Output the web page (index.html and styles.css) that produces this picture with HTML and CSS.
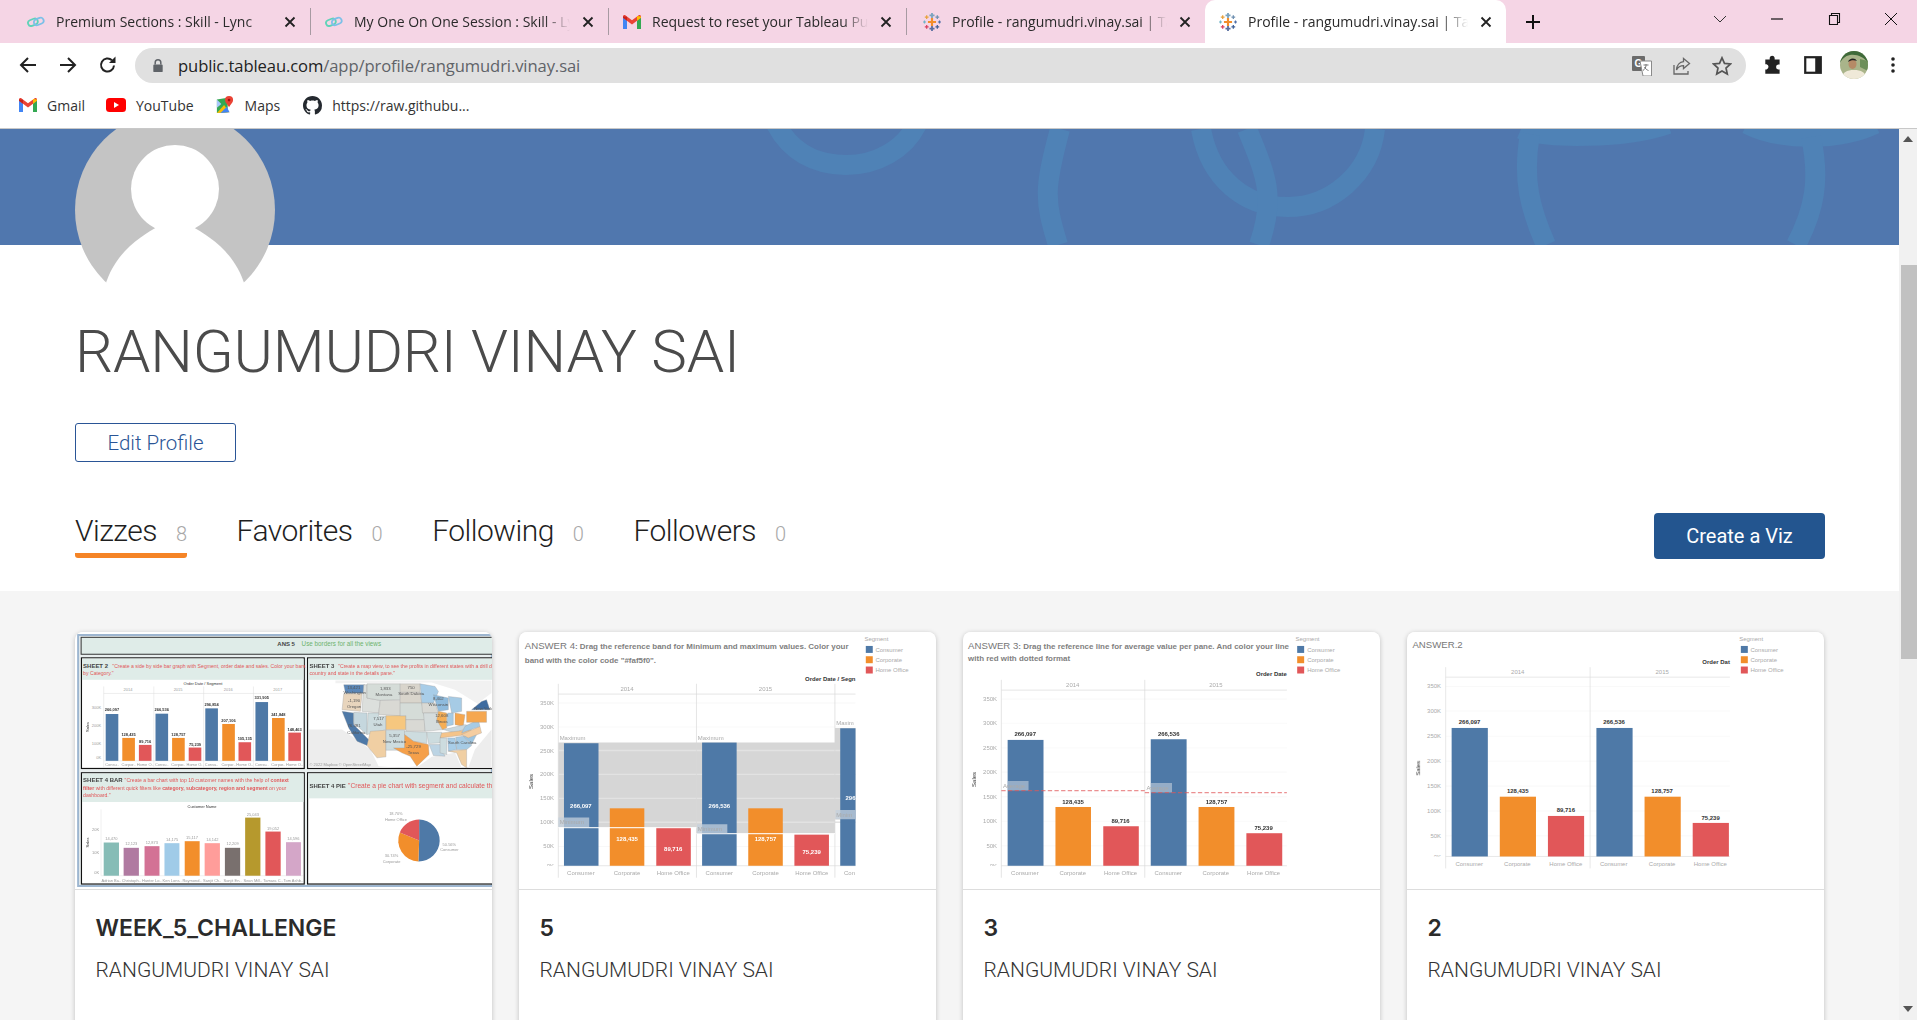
FILE: index.html
```html
<!DOCTYPE html>
<html lang="en">
<head>
  <meta charset="UTF-8">
  <title>Profile - rangumudri.vinay.sai | Tableau Public</title>
  <link rel="stylesheet" href="styles.css">
</head>
<body>
  <svg class="defs" width="0" height="0">
    <symbol id="ic-link" viewBox="0 0 18 12">
      <rect x="0.8" y="3.2" width="10" height="6" rx="3" transform="rotate(-22 6 6)" fill="none" stroke="#5fd3b8" stroke-width="1.8"/>
      <rect x="7" y="2.4" width="10" height="6" rx="3" transform="rotate(-22 12 6)" fill="none" stroke="#7cc0e8" stroke-width="1.8"/>
    </symbol>
    <symbol id="ic-gmail" viewBox="0 0 18 14">
      <path d="M0 2.2V14h4V5.5z" fill="#4285f4"/>
      <path d="M14 5.5V14h4V2.2z" fill="#34a853"/>
      <path d="M0 1.5C0 .2 1.5-.4 2.6.4L9 5.2 15.4.4C16.5-.4 18 .2 18 1.5v1.2l-4 3L9 9.4 4 5.7 0 2.7z" fill="#ea4335"/>
      <path d="M14 .9 18 1.5v1.2l-4 3z" fill="#fbbc04"/>
      <path d="M0 1.5v1.2l4 3V1.8z" fill="#c5221f"/>
    </symbol>
    <symbol id="ic-tableau" viewBox="0 0 20 20">
      <path d="M8.800 5.500h2.400v3.300h3.300v2.400h-3.300v3.300H8.800v-3.300H5.500V8.800h3.300z" fill="#f28e2b"/>
      <path d="M9 0h2v1.800h1.800v1.800H11v1.900H9V3.600H7.200V1.800H9z" fill="#7aa3bf"/>
      <path d="M9 14.500h2v1.900h1.800v1.800H11V20H9v-1.800H7.200v-1.800H9z" fill="#5a6fa0"/>
      <path d="M3.400 2.400h1.400v1.400h1.400v1.400H4.800v1.400H3.400V5.200H2V3.800h1.400z" fill="#e8a23c"/>
      <path d="M15.200 2.400h1.400v1.400H18v1.400h-1.400v1.400h-1.400V5.200h-1.400V3.800h1.400z" fill="#6e8fb0"/>
      <path d="M3.400 13.400h1.400v1.400h1.400v1.400H4.800v1.400H3.400v-1.400H2v-1.400h1.400z" fill="#d8415f"/>
      <path d="M15.200 13.400h1.400v1.400H18v1.400h-1.400v1.400h-1.400v-1.400h-1.400v-1.400h1.400z" fill="#3f5f95"/>
      <path d="M1 8.300h1.300v1.100h1.100v1.200H2.300v1.100H1v-1.100H0V9.400h1z" fill="#6fb3c7"/>
      <path d="M17.700 8.300H19v1.100h1v1.200h-1v1.100h-1.300v-1.100h-1.100V9.400h1.100z" fill="#4f6ea6"/>
    </symbol>
    <symbol id="ic-close" viewBox="0 0 12 12">
      <path d="M1.500 1.500l9 9M10.500 1.500l-9 9" stroke="#222" stroke-width="1.800" fill="none"/>
    </symbol>
  </svg>

  <div class="tabstrip">
    <div class="tab">
      <svg class="tab-icon"><use href="#ic-link"/></svg>
      <span class="tab-title">Premium Sections : Skill - Lync</span>
      <svg class="tab-close"><use href="#ic-close"/></svg>
    </div>
    <div class="tab">
      <svg class="tab-icon"><use href="#ic-link"/></svg>
      <span class="tab-title">My One On One Session : Skill - Lync</span>
      <svg class="tab-close"><use href="#ic-close"/></svg>
    </div>
    <div class="tab">
      <svg class="tab-icon"><use href="#ic-gmail"/></svg>
      <span class="tab-title">Request to reset your Tableau Public password</span>
      <svg class="tab-close"><use href="#ic-close"/></svg>
    </div>
    <div class="tab tab-last">
      <svg class="tab-icon"><use href="#ic-tableau"/></svg>
      <span class="tab-title">Profile - rangumudri.vinay.sai | Tableau Public</span>
      <svg class="tab-close"><use href="#ic-close"/></svg>
    </div>
    <div class="tab tab-active">
      <svg class="tab-icon"><use href="#ic-tableau"/></svg>
      <span class="tab-title">Profile - rangumudri.vinay.sai | Tableau Public</span>
      <svg class="tab-close"><use href="#ic-close"/></svg>
    </div>
    <svg class="new-tab" viewBox="0 0 16 16"><path d="M8 1v14M1 8h14" stroke="#111" stroke-width="2" fill="none"/></svg>
    <div class="window-controls">
      <svg class="win-btn win-chevron" viewBox="0 0 14 14"><path d="M1 4l6 6 6-6" stroke="#333" stroke-width="1" fill="none"/></svg>
      <svg class="win-btn win-min" viewBox="0 0 14 14"><path d="M1 7h12" stroke="#111" stroke-width="1.200"/></svg>
      <svg class="win-btn win-max" viewBox="0 0 14 14"><path d="M2.500 3.500h8v9h-8zM4.500 3.500V1.500h8v9h-2" stroke="#111" stroke-width="1.100" fill="none"/></svg>
      <svg class="win-btn win-x" viewBox="0 0 14 14"><path d="M1 1l12 12M13 1L1 13" stroke="#111" stroke-width="1"/></svg>
    </div>
  </div>

  <div class="toolbar">
    <svg class="nav-icon" viewBox="0 0 20 20"><path d="M18 10H3M10 3l-7 7 7 7" stroke="#222" stroke-width="2" fill="none"/></svg>
    <svg class="nav-icon" viewBox="0 0 20 20"><path d="M2 10h15M10 3l7 7-7 7" stroke="#222" stroke-width="2" fill="none"/></svg>
    <svg class="nav-icon" viewBox="0 0 20 20"><path d="M16 10.500a6.500 6.500 0 1 1-2-5.200" stroke="#222" stroke-width="2" fill="none"/><path d="M17.500 1.500v6.500H11z" fill="#222"/></svg>
    <div class="omnibox">
      <svg class="lock" viewBox="0 0 12 16"><path d="M3 7V4.800a3 3 0 0 1 6 0V7" stroke="#5f6368" stroke-width="1.600" fill="none"/><rect x="1" y="7" width="10" height="8" rx="1" fill="#5f6368"/></svg>
      <span class="url"><b>public.tableau.com</b>/app/profile/rangumudri.vinay.sai</span>
      <span class="omni-right">
        <svg class="omni-icon" viewBox="0 0 20 20"><rect x="0" y="0" width="13" height="15" rx="1" fill="#6b6b6b"/><text x="2.500" y="11" class="gt">G</text><path d="M8 5h11.500v15H11z" fill="#fff" stroke="#8a8a8a"/><path d="M11.500 9h5M14 8v1.500c0 2-1.500 4-3 5M12.500 11c.5 1.500 2.500 3 4 3.500" stroke="#777" fill="none"/></svg>
        <svg class="omni-icon" viewBox="0 0 20 20"><path d="M2 9v9h14v-3" stroke="#666" stroke-width="1.300" fill="none"/><path d="M11.500 2.500l6 5-6 5V9.700C8.500 9.700 6 11 4.500 14c.3-4.500 3-8 7-8.300z" stroke="#666" stroke-width="1.300" fill="none"/></svg>
        <svg class="omni-icon" viewBox="0 0 20 20"><path d="M10 1.800l2.500 5.600 6 .6-4.500 4 1.300 6L10 15l-5.300 3 1.300-6-4.500-4 6-.6z" stroke="#555" stroke-width="1.700" fill="none"/></svg>
      </span>
    </div>
    <svg class="tool-icon ext-icon" viewBox="0 0 20 20"><path d="M7 3.500a2.300 2.300 0 0 1 4.500 0V5H16v4.500h-1.300a2.400 2.400 0 0 0 0 4.700H16V18H3v-4h1.200a2.400 2.400 0 0 0 0-4.600H3V5h4z" fill="#222"/></svg>
    <svg class="tool-icon panel-icon" viewBox="0 0 18 18"><path d="M1 1h16v16H1z" fill="#222"/><path d="M3 3h8v12H3z" fill="#fff"/></svg>
    <svg class="account" viewBox="0 0 28 28">
      <clipPath id="acc-clip"><circle cx="14" cy="14" r="14"/></clipPath>
      <g clip-path="url(#acc-clip)">
        <rect width="28" height="28" fill="#a9b48a"/>
        <path d="M0 0h28v12C24 6 17 3 10 4 5 5 2 8 0 12z" fill="#3f6a3a"/>
        <path d="M20 8l8 2v10l-8-4z" fill="#6d8f5a"/>
        <path d="M2 28c0-7 5-9 12-9s12 2 12 9z" fill="#efe9d8"/>
        <ellipse cx="12.500" cy="13" rx="4" ry="5" fill="#b58a66"/>
        <path d="M8 11c1-4 7-5 9-1-3-1-6-1-9 1z" fill="#222"/>
      </g>
    </svg>
    <svg class="menu-dots" viewBox="0 0 4 16"><circle cx="2" cy="2" r="1.800" fill="#222"/><circle cx="2" cy="8" r="1.800" fill="#222"/><circle cx="2" cy="14" r="1.800" fill="#222"/></svg>
  </div>

  <div class="bookmarks">
    <span class="bm bm-gmail"><svg class="bm-icon"><use href="#ic-gmail"/></svg>Gmail</span>
    <span class="bm bm-yt">
      <svg class="bm-icon" viewBox="0 0 20 14"><rect width="20" height="14" rx="3.500" fill="#f00"/><path d="M8 4l5 3-5 3z" fill="#fff"/></svg>YouTube</span>
    <span class="bm bm-maps">
      <svg class="bm-icon maps-icon" viewBox="0 0 20 20">
        <path d="M1 4l12-2v16L1 19z" fill="#34a853"/>
        <path d="M1 19l8-9 6 8z" fill="#fbbc04"/>
        <path d="M5 19l7-7 3 6z" fill="#4285f4"/>
        <path d="M1 4l5 5-5 4z" fill="#a8c7fa"/>
        <path d="M14.500 0a4.500 4.500 0 0 1 4.500 4.500c0 3-3 5-4.500 8C13 9.500 10 7.500 10 4.500A4.500 4.500 0 0 1 14.500 0z" fill="#ea4335"/>
        <circle cx="14.500" cy="4.500" r="1.500" fill="#a50e0e"/>
      </svg>Maps</span>
    <span class="bm bm-gh">
      <svg class="bm-icon" viewBox="0 0 16 16"><path d="M8 0C3.580 0 0 3.580 0 8c0 3.540 2.290 6.530 5.470 7.590.4.070.55-.17.55-.38 0-.19-.01-.82-.01-1.490-2.010.37-2.530-.49-2.690-.94-.09-.23-.48-.94-.82-1.130-.28-.15-.68-.52-.01-.53.63-.01 1.080.58 1.230.82.720 1.210 1.870.870 2.330.660.070-.520.280-.870.510-1.070-1.780-.200-3.640-.890-3.640-3.950 0-.870.310-1.590.820-2.150-.080-.200-.360-1.020.080-2.120 0 0 .670-.210 2.200.820.640-.180 1.320-.270 2-.270s1.360.090 2 .270c1.530-1.040 2.200-.820 2.200-.820.440 1.100.160 1.920.080 2.120.510.560.820 1.270.820 2.150 0 3.070-1.870 3.750-3.650 3.950.290.250.540.730.540 1.480 0 1.070-.010 1.930-.010 2.200 0 .210.150.460.550.380A8.010 8.010 0 0 0 16 8c0-4.420-3.580-8-8-8z" fill="#24292f"/></svg>https://raw.githubu...</span>
  </div>

  <div class="viewport">
    <main class="content">
      <section class="banner">
        <svg class="banner-art" viewBox="0 0 1899 116" preserveAspectRatio="none">
          <g fill="none" stroke="#4f82b6" stroke-width="20">
            <path d="M776 -5C790 22 815 36 846 36S905 20 917 -5"/>
            <path d="M1060 0C1044 60 1044 70 1058 116"/>
            <path d="M1201 0C1210 50 1245 78 1288 78S1370 45 1375 0"/>
            <path d="M1247 0C1268 50 1275 70 1259 116"/>
            <path d="M1521 0C1545 10 1625 10 1668 -5"/>
            <path d="M1530 5C1522 50 1530 80 1546 116"/>
            <path d="M1747 -5C1780 12 1840 12 1875 -5"/>
            <path d="M1811 8C1820 50 1815 80 1796 116"/>
          </g>
        </svg>
      </section>

      <svg class="avatar" viewBox="0 0 200 200">
        <circle cx="100" cy="100" r="100" fill="#c4c4c4"/>
        <circle cx="100" cy="79" r="44" fill="#fff"/>
        <path d="M30 176C40 142 66 126 84 116H116C134 126 160 142 170 176V202H30z" fill="#fff"/>
      </svg>

      <section class="profile">
        <h1 class="profile-name">RANGUMUDRI VINAY SAI</h1>
        <a class="edit-btn">Edit Profile</a>
        <div class="profile-nav">
          <nav class="nav-tabs">
            <a class="nav-tab nav-tab-on">Vizzes<span class="count">8</span></a>
            <a class="nav-tab">Favorites<span class="count">0</span></a>
            <a class="nav-tab">Following<span class="count">0</span></a>
            <a class="nav-tab">Followers<span class="count">0</span></a>
          </nav>
          <a class="create-btn">Create a Viz</a>
        </div>
      </section>

      <section class="gallery">
        <article class="card">
          <svg class="thumb" viewBox="48 36 1251 774">
            <rect x="48" y="36" width="1251" height="774" fill="#fff"/>
            <rect x="55" y="45" width="1246" height="756" fill="#e8eeee" stroke="#9db6d0" stroke-width="6"/>
            <rect x="64" y="52" width="1240" height="51" fill="#dfece8" stroke="#333" stroke-width="3"/>
            <text x="655" y="77" class="sh">ANS 5</text>
            <text x="728" y="77" class="green">Use borders for all the views</text>

            <rect x="65" y="114" width="671" height="333" fill="#fff" stroke="#111" stroke-width="3.500"/>
            <rect x="67" y="116" width="667" height="64" fill="#dfece8"/>
            <text x="70" y="144" class="sh">SHEET 2</text>
            <text x="158" y="144" class="red">"Create a side by side bar graph with Segment, order date and sales. Color your bars</text>
            <text x="70" y="166" class="red">by Category."</text>
            <text x="431" y="195" class="tiny dark" text-anchor="middle">Order Date / Segment</text>
            <path d="M132 200V445M283 200V445M433 200V445M583 200V445M132 221H732M132 424H732" stroke="#ddd" stroke-width="1.500" fill="none"/>
            <text x="205" y="215" class="tiny" text-anchor="middle">2014</text>
            <text x="356" y="215" class="tiny" text-anchor="middle">2015</text>
            <text x="507" y="215" class="tiny" text-anchor="middle">2016</text>
            <text x="656" y="215" class="tiny" text-anchor="middle">2017</text>
            <text x="124" y="268" class="tiny" text-anchor="end">300K</text>
            <text x="124" y="321" class="tiny" text-anchor="end">200K</text>
            <text x="124" y="375" class="tiny" text-anchor="end">100K</text>
            <text x="124" y="420" class="tiny" text-anchor="end">0K</text>
            <text transform="translate(87 322) rotate(-90)" class="tiny dark" text-anchor="middle">Sales</text>
            <g class="blue">
              <rect x="138" y="283" width="38" height="141"/><rect x="288" y="282" width="38" height="142"/><rect x="438" y="266" width="38" height="158"/><rect x="589" y="247" width="38" height="177"/>
            </g>
            <g class="orange">
              <rect x="188" y="355" width="38" height="69"/><rect x="338" y="355" width="38" height="69"/><rect x="489" y="313" width="38" height="111"/><rect x="639" y="295" width="38" height="129"/>
            </g>
            <g class="redbar">
              <rect x="238" y="376" width="38" height="48"/><rect x="388" y="384" width="38" height="40"/><rect x="538" y="368" width="38" height="56"/><rect x="688" y="339" width="38" height="85"/>
            </g>
            <g class="tiny dark bold" text-anchor="middle">
              <text x="157" y="275">266,097</text><text x="207" y="349">128,435</text><text x="257" y="370">89,716</text>
              <text x="307" y="275">266,536</text><text x="357" y="349">128,757</text><text x="407" y="378">75,239</text>
              <text x="457" y="259">296,854</text><text x="508" y="306">207,106</text><text x="557" y="362">105,135</text>
              <text x="608" y="239">331,905</text><text x="658" y="288">241,848</text><text x="707" y="333">148,463</text>
            </g>
            <g class="tiny" text-anchor="middle">
              <text x="157" y="441">Consu..</text><text x="207" y="441">Corpor..</text><text x="257" y="441">Home O..</text>
              <text x="307" y="441">Consu..</text><text x="357" y="441">Corpor..</text><text x="407" y="441">Home O..</text>
              <text x="457" y="441">Consu..</text><text x="508" y="441">Corpor..</text><text x="557" y="441">Home O..</text>
              <text x="608" y="441">Consu..</text><text x="658" y="441">Corpor..</text><text x="707" y="441">Home O..</text>
            </g>

            <rect x="746" y="114" width="560" height="333" fill="#fff" stroke="#111" stroke-width="3.500"/>
            <rect x="748" y="116" width="556" height="64" fill="#dfece8"/>
            <text x="752" y="144" class="sh">SHEET 3</text>
            <text x="838" y="144" class="red">"Create a map view, to see the profits in different states with a drill down on</text>
            <text x="752" y="167" class="red">country and state in the details pane."</text>
            <g transform="translate(720 150)" stroke="#9a9a9a" stroke-width="1">
              <path d="M130 180L215 240 240 290 300 295 360 290 400 262 470 250 490 295H510L530 240 580 180V295H30V180z" fill="#ededed" stroke="none"/>
              <path d="M110 32H580V70L540 100 575 125 470 60 400 38 110 40z" fill="#f1f1f1" stroke="none"/>
              <path d="M135 45H198L195 70H140z" fill="#5b87b8"/>
              <path d="M135 72H190L185 125 130 120z" fill="#e8d5bd"/>
              <path d="M130 125L165 130V165L215 215 205 228 175 215 150 175z" fill="#4e79a7"/>
              <path d="M165 128L205 130V195L165 160z" fill="#c5d7de"/>
              <path d="M195 45H205V85L245 92 240 130 190 125z" fill="#dcdfdc"/>
              <path d="M205 42H305V90L245 92 205 85z" fill="#d5dcd8"/>
              <path d="M245 92H305V138L240 135z" fill="#d9d9d4"/>
              <path d="M208 130H240V140H262V180L205 195z" fill="#cddcdf"/>
              <path d="M215 185L262 182V262L235 265 205 228z" fill="#f0cfa3"/>
              <path d="M262 138H322V180H262z" fill="#f6c77f"/>
              <path d="M262 182H318V242H262z" fill="#cddcdf"/>
              <path d="M305 42H365V68H305z" fill="#d9d5cc"/>
              <path d="M305 68H365L370 100H305z" fill="#d9d5cc"/>
              <path d="M305 100H370L380 150H322V138H305z" fill="#d5dcd8"/>
              <path d="M322 150H380V185H322z" fill="#d9d9d4"/>
              <path d="M318 185L385 188V222L345 215 318 195z" fill="#cddcdf"/>
              <path d="M318 195L345 215 390 225 392 255 355 290 335 260 310 250 285 235H318z" fill="#f5a04a"/>
              <path d="M365 42L410 50 420 65 405 100H370z" fill="#a8cde8"/>
              <path d="M370 100H410L420 130H372z" fill="#d9d9d4"/>
              <path d="M375 130H420L435 180 380 185z" fill="#d5dcdc"/>
              <path d="M385 188H430L425 220 390 222z" fill="#cddcdf"/>
              <path d="M392 225H425L440 260 405 258z" fill="#bcd4e4"/>
              <path d="M405 75L450 85V120L420 125z" fill="#8fbbdd"/>
              <path d="M420 125L445 130V175L432 180 415 150z" fill="#f5ae55"/>
              <path d="M450 80L490 85V125L460 130z" fill="#a6cbe5"/>
              <path d="M448 130H465V165L445 170z" fill="#a6cbe5"/>
              <path d="M470 130L500 135 495 170 470 165z" fill="#f5a750"/>
              <path d="M435 180L500 165 520 170 470 190z" fill="#c9d8df"/>
              <path d="M430 190L520 180 510 195 425 205z" fill="#f5c48a"/>
              <path d="M425 205H445V255L425 250z" fill="#cddcdf"/>
              <path d="M448 205H470L475 240 450 245z" fill="#a8cde8"/>
              <path d="M472 203L495 200 520 228 505 240H475z" fill="#a6cbe5"/>
              <path d="M495 200L535 195 520 225z" fill="#9cc4e0"/>
              <path d="M490 195L545 170 550 190 510 205z" fill="#f5cda0"/>
              <path d="M450 245L505 240V295L490 285 475 250z" fill="#f0cfa3"/>
              <path d="M500 170L540 150 545 170 490 190z" fill="#a6cbe5"/>
              <path d="M505 125H565V158H505z" fill="#f5a750"/>
              <path d="M520 120L550 95 565 90 575 120z" fill="#3e6b9f"/>
            </g>
            <g class="tiny map" text-anchor="middle">
              <text x="885" y="207">13,421</text><text x="888" y="223">Washington</text>
              <text x="886" y="248">-1,190</text><text x="886" y="266">Oregon</text>
              <text x="980" y="212">1,833</text><text x="976" y="230">Montana</text>
              <text x="1058" y="207">750</text><text x="1058" y="225">South Dakota</text>
              <text x="886" y="322">76,381</text><text x="893" y="342">California</text>
              <text x="960" y="301">7,517</text><text x="958" y="320">Utah</text>
              <text x="1008" y="352">5,357</text><text x="1008" y="371">New Mexico</text>
              <text x="1065" y="385">-25,729</text><text x="1065" y="403">Texas</text>
              <text x="1150" y="293">12,608</text><text x="1150" y="311">Illinois</text>
              <text x="1140" y="241">8,402</text><text x="1140" y="259">Wisconsin</text>
              <text x="1275" y="270">New York</text><text x="1212" y="374">South Carolina</text>
            </g>
            <text x="752" y="441" class="tiny">© 2022 Mapbox © OpenStreetMap</text>

            <rect x="65" y="460" width="671" height="335" fill="#fff" stroke="#111" stroke-width="3.500"/>
            <rect x="67" y="462" width="667" height="86" fill="#dfece8"/>
            <text x="70" y="489" class="sh">SHEET 4 BAR</text>
            <text x="195" y="489" class="red">"Create a bar chart with top 10 customer names with the help of <tspan class="bold">context</tspan></text>
            <text x="70" y="513" class="red"><tspan class="bold">filter</tspan> with different quick filters like <tspan class="bold">category, subcategory, region and segment</tspan> on your</text>
            <text x="70" y="534" class="red">dashboard."</text>
            <text x="428" y="565" class="tiny dark" text-anchor="middle">Customer Name</text>
            <path d="M124 570V770H732" stroke="#e2e2e2" fill="none" stroke-width="1.500"/>
            <text x="118" y="635" class="tiny" text-anchor="end">20K</text>
            <text x="118" y="706" class="tiny" text-anchor="end">10K</text>
            <text x="118" y="766" class="tiny" text-anchor="end">0K</text>
            <text transform="translate(87 670) rotate(-90)" class="tiny dark" text-anchor="middle">Sales</text>
            <rect x="132" y="670" width="46" height="100" fill="#86bcb6"/>
            <rect x="192" y="686" width="46" height="84" fill="#b07aa1"/>
            <rect x="255" y="681" width="45" height="89" fill="#d37295"/>
            <rect x="315" y="672" width="45" height="98" fill="#a0cbe8"/>
            <rect x="376" y="666" width="45" height="104" fill="#f28e2b"/>
            <rect x="436" y="672" width="46" height="98" fill="#ff9d9a"/>
            <rect x="497" y="686" width="46" height="84" fill="#79706e"/>
            <rect x="558" y="595" width="46" height="175" fill="#b6992d"/>
            <rect x="619" y="637" width="46" height="133" fill="#e15759"/>
            <rect x="681" y="669" width="45" height="101" fill="#d4a6c8"/>
            <g class="tiny" text-anchor="middle">
              <text x="155" y="663">14,470</text><text x="215" y="679">12,123</text><text x="277" y="674">12,873</text><text x="338" y="665">14,175</text><text x="398" y="659">15,117</text><text x="459" y="665">14,142</text><text x="520" y="679">12,209</text><text x="581" y="589">25,043</text><text x="642" y="631">19,052</text><text x="703" y="662">14,596</text>
              <text x="155" y="788">Adrian Ba..</text><text x="215" y="788">Christoph..</text><text x="277" y="788">Hunter Lo..</text><text x="338" y="788">Ken Lons..</text><text x="398" y="788">Raymond..</text><text x="459" y="788">Sanjit Ch..</text><text x="520" y="788">Sanjit En..</text><text x="581" y="788">Sean Mill..</text><text x="642" y="788">Tamara C..</text><text x="703" y="788">Tom Ashb..</text>
            </g>

            <rect x="746" y="460" width="560" height="335" fill="#fff" stroke="#111" stroke-width="3.500"/>
            <rect x="748" y="462" width="556" height="75" fill="#dfece8"/>
            <text x="752" y="505" class="sh">SHEET 4 PIE</text>
            <text x="868" y="505" class="red big">"Create a pie chart with segment and calculate the</text>
            <path d="M1082 664V601A63 63 0 0 1 1079.800 727z" fill="#4e79a7"/>
            <path d="M1082 664L1079.800 727A63 63 0 0 1 1023.900 639.700z" fill="#f28e2b"/>
            <path d="M1082 664L1023.900 639.700A63 63 0 0 1 1082 601z" fill="#e15759"/>
            <g class="tiny" text-anchor="middle">
              <text x="1012" y="588">18.70%</text><text x="1012" y="606">Home Office</text>
              <text x="1173" y="680">50.56%</text><text x="1173" y="697">Consumer</text>
              <text x="999" y="714">30.74%</text><text x="999" y="731">Corporate</text>
            </g>
          </svg>
          <div class="card-body">
            <h2 class="card-title">WEEK_5_CHALLENGE</h2>
            <p class="card-author">RANGUMUDRI VINAY SAI</p>
          </div>
        </article>

        <article class="card">
          <svg class="thumb" viewBox="27 36 1251 774">
            <rect x="27" y="36" width="1251" height="774" fill="#fff"/>
            <text x="42" y="87" class="ans">ANSWER 4<tspan class="q">: Drag the reference band for Minimum and maximum values. Color your</tspan></text>
            <text x="42" y="130" class="q">band with the color code "#faf5f0".</text>
            <text x="1038" y="183" class="lab dark bold" text-anchor="end">Order Date / Segn</text>
            <g class="lab">
              <text x="1065" y="64" class="dark">Segment</text>
              <text x="1098" y="95">Consumer</text><text x="1098" y="126">Corporate</text><text x="1098" y="157">Home Office</text>
            </g>
            <rect x="1069" y="78" width="21" height="21" class="blue"/><rect x="1069" y="109" width="21" height="21" class="orange"/><rect x="1069" y="140" width="21" height="21" class="redbar"/>
            <path d="M143 250H1038M143 322H1038M143 393H1038M143 465H1038M143 537H1038M143 609H1038M143 682H1038" stroke="#f0f0f0" stroke-width="1.500"/>
            <path d="M143 369H559V625H143zM559 369H976V643H559zM976 325H1038V601H976z" fill="#d6d6d6"/>
            <path d="M143 393H1038M143 465H1038M143 537H1038M143 609H1038" stroke="#e2e2e2" stroke-width="4"/>
            <path d="M143 192V776M559 192V776M976 192V776M143 223H1038M143 740H1038" stroke="#d8d8d8" stroke-width="2" fill="none"/>
            <g class="blue"><rect x="160" y="371" width="104" height="369"/><rect x="576" y="369" width="104" height="371"/><rect x="992" y="326" width="46" height="414"/></g>
            <g class="orange"><rect x="298" y="567" width="104" height="173"/><rect x="715" y="567" width="104" height="173"/></g>
            <g class="redbar"><rect x="438" y="625" width="104" height="115"/><rect x="854" y="646" width="104" height="94"/></g>
            <path d="M143 625H559M559 643H976" stroke="#fff" stroke-width="4" opacity=".85"/>
            <path d="M143 595H236V623H143zM561 615H652V643H561zM978 572H1038V600H978z" fill="#c4d0dc" opacity=".75"/>
            <g class="lab" text-anchor="middle">
              <text x="350" y="214">2014</text><text x="767" y="214">2015</text>
              <text x="211" y="768">Consumer</text><text x="350" y="768">Corporate</text><text x="489" y="768">Home Office</text>
              <text x="628" y="768">Consumer</text><text x="767" y="768">Corporate</text><text x="906" y="768">Home Office</text>
              <text x="1020" y="768">Con</text>
            </g>
            <g class="lab" text-anchor="end">
              <text x="130" y="256">350K</text><text x="130" y="328">300K</text><text x="130" y="399">250K</text><text x="130" y="471">200K</text><text x="130" y="543">150K</text><text x="130" y="615">100K</text><text x="130" y="688">50K</text><text x="130" y="747">0K</text>
            </g>
            <rect x="90" y="740" width="44" height="12" fill="#fff"/>
            <g class="lab"><text x="147" y="362">Maximum</text><text x="563" y="360">Maximum</text><text x="980" y="316">Maxim</text><text x="147" y="615">Minimum</text><text x="563" y="635">Minimum</text><text x="980" y="592">Minim</text></g>
            <g class="lab white bold" text-anchor="middle"><text x="211" y="567">266,097</text><text x="350" y="666">128,435</text><text x="489" y="695">89,716</text><text x="628" y="566">266,536</text><text x="767" y="666">128,757</text><text x="906" y="704">75,239</text><text x="1023" y="543">296</text></g>
            <text transform="translate(68 486) rotate(-90)" class="lab dark" text-anchor="middle">Sales</text>
          </svg>
          <div class="card-body">
            <h2 class="card-title">5</h2>
            <p class="card-author">RANGUMUDRI VINAY SAI</p>
          </div>
        </article>

        <article class="card">
          <svg class="thumb" viewBox="24 36 1251 774">
            <rect x="24" y="36" width="1251" height="774" fill="#fff"/>
            <text x="37" y="87" class="ans">ANSWER 3<tspan class="q">: Drag the reference line for average value per pane. And color your line</tspan></text>
            <text x="37" y="122" class="q">with red with dotted format</text>
            <text x="997" y="170" class="lab dark bold" text-anchor="end">Order Date</text>
            <g class="lab">
              <text x="1023" y="64" class="dark">Segment</text>
              <text x="1058" y="95">Consumer</text><text x="1058" y="126">Corporate</text><text x="1058" y="157">Home Office</text>
            </g>
            <rect x="1028" y="78" width="21" height="21" class="blue"/><rect x="1028" y="109" width="21" height="21" class="orange"/><rect x="1028" y="140" width="21" height="21" class="redbar"/>
            <path d="M137 238H997M137 311H997M137 385H997M137 458H997M137 532H997M137 606H997M137 680H997" stroke="#f2f2f2" stroke-width="1.500"/>
            <path d="M137 180V776M569 180V776M137 211H997M137 740H997" stroke="#d8d8d8" stroke-width="2" fill="none"/>
            <g class="blue"><rect x="156" y="361" width="108" height="379"/><rect x="587" y="359" width="108" height="381"/></g>
            <g class="orange"><rect x="300" y="563" width="107" height="177"/><rect x="731" y="563" width="108" height="177"/></g>
            <g class="redbar"><rect x="444" y="621" width="107" height="119"/><rect x="875" y="642" width="108" height="98"/></g>
            <path d="M156 485H219V513H156zM587 491H651V519H587z" fill="#c4d0dc" opacity=".6"/>
            <path d="M137 514H569M569 520H997" stroke="#e15759" stroke-width="2.500" stroke-dasharray="13 7"/>
            <g class="lab" text-anchor="middle">
              <text x="352" y="202">2014</text><text x="783" y="202">2015</text>
              <text x="208" y="768">Consumer</text><text x="352" y="768">Corporate</text><text x="496" y="768">Home Office</text>
              <text x="640" y="768">Consumer</text><text x="783" y="768">Corporate</text><text x="927" y="768">Home Office</text>
            </g>
            <g class="lab" text-anchor="end">
              <text x="124" y="244">350K</text><text x="124" y="317">300K</text><text x="124" y="391">250K</text><text x="124" y="464">200K</text><text x="124" y="538">150K</text><text x="124" y="612">100K</text><text x="124" y="686">50K</text><text x="124" y="747">0K</text>
            </g>
            <rect x="90" y="740" width="44" height="12" fill="#fff"/>
            <g class="lab"><text x="142" y="506">Average</text><text x="574" y="513">Average</text></g>
            <g class="lab dark bold" text-anchor="middle"><text x="209" y="350">266,097</text><text x="353" y="553">128,435</text><text x="496" y="611">89,716</text><text x="641" y="349">266,536</text><text x="785" y="553">128,757</text><text x="927" y="631">75,239</text></g>
            <text transform="translate(62 480) rotate(-90)" class="lab dark" text-anchor="middle">Sales</text>
          </svg>
          <div class="card-body">
            <h2 class="card-title">3</h2>
            <p class="card-author">RANGUMUDRI VINAY SAI</p>
          </div>
        </article>

        <article class="card">
          <svg class="thumb" viewBox="20 36 1251 774">
            <rect x="20" y="36" width="1251" height="774" fill="#fff"/>
            <text x="34" y="85" class="ans">ANSWER.2</text>
            <text x="990" y="133" class="lab dark bold" text-anchor="end">Order Dat</text>
            <g class="lab">
              <text x="1018" y="64" class="dark">Segment</text>
              <text x="1052" y="95">Consumer</text><text x="1052" y="126">Corporate</text><text x="1052" y="157">Home Office</text>
            </g>
            <rect x="1023" y="78" width="21" height="21" class="blue"/><rect x="1023" y="109" width="21" height="21" class="orange"/><rect x="1023" y="140" width="21" height="21" class="redbar"/>
            <path d="M134 200H990M134 274H990M134 350H990M134 425H990M134 500H990M134 575H990M134 650H990" stroke="#f2f2f2" stroke-width="1.500"/>
            <path d="M134 142V748M569 142V748M134 172H990M134 712H990" stroke="#dcdcdc" stroke-width="2" fill="none"/>
            <g class="blue"><rect x="152" y="325" width="109" height="387"/><rect x="588" y="325" width="109" height="387"/></g>
            <g class="orange"><rect x="297" y="532" width="109" height="180"/><rect x="733" y="532" width="109" height="180"/></g>
            <g class="redbar"><rect x="442" y="590" width="109" height="122"/><rect x="878" y="611" width="109" height="101"/></g>
            <g class="lab" text-anchor="middle">
              <text x="351" y="164">2014</text><text x="786" y="164">2015</text>
              <text x="205" y="740">Consumer</text><text x="350" y="740">Corporate</text><text x="496" y="740">Home Office</text>
              <text x="640" y="740">Consumer</text><text x="786" y="740">Corporate</text><text x="931" y="740">Home Office</text>
            </g>
            <g class="lab" text-anchor="end">
              <text x="120" y="206">350K</text><text x="120" y="280">300K</text><text x="120" y="356">250K</text><text x="120" y="431">200K</text><text x="120" y="506">150K</text><text x="120" y="581">100K</text><text x="120" y="656">50K</text><text x="120" y="719">0K</text>
            </g>
            <rect x="90" y="712" width="40" height="12" fill="#fff"/>
            <g class="lab dark bold" text-anchor="middle"><text x="206" y="314">266,097</text><text x="351" y="521">128,435</text><text x="496" y="579">89,716</text><text x="641" y="314">266,536</text><text x="786" y="521">128,757</text><text x="932" y="601">75,239</text></g>
            <text transform="translate(58 446) rotate(-90)" class="lab dark" text-anchor="middle">Sales</text>
          </svg>
          <div class="card-body">
            <h2 class="card-title">2</h2>
            <p class="card-author">RANGUMUDRI VINAY SAI</p>
          </div>
        </article>
      </section>
    </main>

    <div class="scrollbar">
      <span class="arrow-up"></span>
      <span class="thumb-bar"></span>
      <span class="arrow-down"></span>
    </div>
  </div>
</body>
</html>
```

FILE: styles.css
```css
* {
  box-sizing: border-box;
}
html, body {
  margin: 0;
  height: 100%;
  overflow: hidden;
}
body {
  display: flex;
  flex-direction: column;
  font-family: "Open Sans", "Noto Sans", sans-serif;
  background: #fff;
  color: #222;
}
.defs {
  position: absolute;
}

/* browser chrome */
.tabstrip {
  display: flex;
  align-items: stretch;
  height: 43px;
  padding-left: 13px;
  background: #f5d5e5;
  flex: none;
}
.tab {
  display: flex;
  align-items: center;
  width: 298px;
  padding: 0 14px 0 14px;
  border-right: 1px solid #a79aa2;
  margin: 8px 0;
  font-size: 14px;
  color: #2a2a2a;
}
.tab-last {
  border-right: 0;
  padding-left: 16px;
}
.tab-active {
  width: 301px;
  margin: 0;
  padding-top: 0;
  border: 0;
  background: #fff;
  border-radius: 10px 10px 0 0;
}
.tab-icon {
  width: 18px;
  height: 18px;
  flex: none;
  margin-right: 11px;
}
.tab-title {
  flex: 1;
  min-width: 0;
  overflow: hidden;
  white-space: nowrap;
  -webkit-mask-image: linear-gradient(to right, #000 88%, transparent);
  mask-image: linear-gradient(to right, #000 88%, transparent);
}
.tab-close {
  width: 12px;
  height: 12px;
  margin-left: 12px;
  flex: none;
}
.new-tab {
  width: 16px;
  height: 16px;
  margin: 14px 0 0 19px;
}
.window-controls {
  display: flex;
  flex: 1;
  justify-content: flex-end;
  align-items: center;
  gap: 43px;
  padding: 0 19px 6px 0;
}
.win-btn {
  width: 14px;
  height: 14px;
  flex: none;
}

.toolbar {
  display: flex;
  align-items: center;
  height: 44px;
  padding-left: 18px;
  flex: none;
}
.nav-icon {
  width: 20px;
  height: 20px;
  margin-right: 20px;
  flex: none;
}
.omnibox {
  display: flex;
  align-items: center;
  width: 1611px;
  height: 35px;
  margin: 1px 0 0 -3px;
  padding: 0 0 0 17px;
  border-radius: 18px;
  background: #e0e0e0;
  flex: none;
}
.lock {
  width: 12px;
  height: 15px;
  margin-right: 14px;
}
.url {
  font-size: 16.6px;
  color: #5f6368;
  letter-spacing: -.1px;
}
.url b {
  font-weight: 400;
  color: #222;
}
.omni-right {
  display: flex;
  align-items: center;
  gap: 20px;
  margin-left: auto;
  padding-right: 14px;
}
.omni-icon {
  width: 20px;
  height: 20px;
}
.gt {
  font: bold 10px "Liberation Sans", sans-serif;
  fill: #fff;
}
.tool-icon {
  width: 22px;
  height: 22px;
  flex: none;
}
.ext-icon {
  margin-left: 16px;
}
.panel-icon {
  width: 20px;
  height: 20px;
  margin-left: 19px;
}
.account {
  width: 28px;
  height: 28px;
  margin-left: 17px;
  flex: none;
}
.menu-dots {
  width: 4px;
  height: 16px;
  margin-left: 23px;
}

.bookmarks {
  display: flex;
  align-items: center;
  height: 42px;
  padding: 0 0 5px 19px;
  border-bottom: 1px solid #c8c8c8;
  font-size: 14px;
  color: #333;
  flex: none;
}
.bm {
  display: flex;
  align-items: center;
  margin-right: 21px;
}
.bm-yt {
  margin-right: 22px;
}
.bm-maps {
  margin-right: 23px;
}
.bm-icon {
  width: 18px;
  height: 14px;
  margin-right: 10px;
}
.bm-yt .bm-icon {
  width: 20px;
}
.maps-icon {
  height: 18px;
  margin-right: 11px;
}
.bm-gh .bm-icon {
  width: 19px;
  height: 19px;
}

/* page */
.viewport {
  display: flex;
  flex: 1;
  min-height: 0;
}
.content {
  position: relative;
  flex: 1;
  min-width: 0;
  overflow: hidden;
  background: #f5f5f5;
}
.banner {
  height: 116px;
  background: #5077ae;
}
.banner-art {
  display: block;
  width: 100%;
  height: 100%;
}
.avatar {
  position: absolute;
  left: 75px;
  top: -19px;
  width: 200px;
  height: 200px;
}
.profile {
  height: 346px;
  padding: 71px 74px 0 75px;
  background: #fff;
  font-family: Roboto, "Liberation Sans", sans-serif;
  font-weight: 300;
}
.profile-name {
  margin: 0 0 35px;
  font-size: 60px;
  line-height: 72px;
  font-weight: 300;
  color: #4b4b4b;
  letter-spacing: -.2px;
}
.edit-btn {
  display: flex;
  align-items: center;
  justify-content: center;
  width: 161px;
  height: 39px;
  border: 1px solid #2a5596;
  border-radius: 3px;
  font-size: 20.5px;
  color: #2a5596;
}
.profile-nav {
  display: flex;
  align-items: flex-end;
  justify-content: space-between;
  margin-top: 48px;
}
.nav-tabs {
  display: flex;
  gap: 50px;
  margin-bottom: 3px;
}
.nav-tab {
  display: flex;
  align-items: baseline;
  height: 48px;
  font-size: 30px;
  line-height: 42px;
  color: #1f1f1f;
  letter-spacing: -.5px;
}
.nav-tab-on {
  border-bottom: 5px solid #f58426;
  border-radius: 0 0 3px 3px;
}
.count {
  margin-left: 19px;
  font-size: 20px;
  color: #a8a8a8;
}
.create-btn {
  display: flex;
  align-items: center;
  justify-content: center;
  width: 171px;
  height: 46px;
  margin-bottom: 2px;
  border-radius: 4px;
  background: #23558f;
  font-size: 20px;
  font-weight: 400;
  color: #fff;
}

.gallery {
  display: grid;
  grid-template-columns: repeat(4, 417px);
  gap: 27px;
  padding: 41px 0 0 75px;
}
.card {
  height: 500px;
  border-radius: 8px 8px 0 0;
  background: #fff;
  box-shadow: 0 1px 5px rgba(0, 0, 0, .22);
  overflow: hidden;
}
.thumb {
  display: block;
  width: 417px;
  height: 258px;
  filter: blur(.6px);
  border-bottom: 1px solid #ddd;
  font-family: "Liberation Sans", sans-serif;
}
.thumb .blue { fill: #4e79a7; }
.thumb .orange { fill: #f28e2b; }
.thumb .redbar { fill: #e15759; }
.sh { font-size: 18px; font-weight: 700; fill: #444; }
.green { font-size: 19px; fill: #6db36d; }
.red { font-size: 15.5px; fill: #e15759; }
.red.big { font-size: 20px; }
.tiny { font-size: 12px; fill: #999; }
.tiny.dark, .lab.dark { fill: #333; }
.tiny.map { fill: #555; font-size: 13px; }
.bold { font-weight: 700; }
.ans { font-size: 29px; fill: #777; }
.q { font-size: 24px; font-weight: 700; fill: #808080; }
.lab { font-size: 18px; fill: #aaa; }
.lab.white { fill: #fff; }

.card-body {
  padding: 23px 0 0 20.5px;
  font-family: Roboto, "Liberation Sans", sans-serif;
}
.card-title {
  margin: 0;
  font-family: Inter, "Liberation Sans", sans-serif;
  font-size: 23px;
  line-height: 30px;
  font-weight: 600;
  color: #2b2b2b;
}
.card-author {
  margin: 12px 0 0;
  font-size: 21px;
  line-height: 30px;
  font-weight: 300;
  color: #333;
}

.scrollbar {
  position: relative;
  width: 18px;
  background: #f1f1f1;
  flex: none;
}
.thumb-bar {
  position: absolute;
  left: 2px;
  right: 0;
  top: 136px;
  height: 394px;
  background: #c1c1c1;
}
.arrow-up, .arrow-down {
  position: absolute;
  left: 4px;
  width: 0;
  height: 0;
  border-left: 5px solid transparent;
  border-right: 5px solid transparent;
}
.arrow-up {
  top: 7px;
  border-bottom: 6px solid #555;
}
.arrow-down {
  bottom: 8px;
  border-top: 6px solid #555;
}
```
